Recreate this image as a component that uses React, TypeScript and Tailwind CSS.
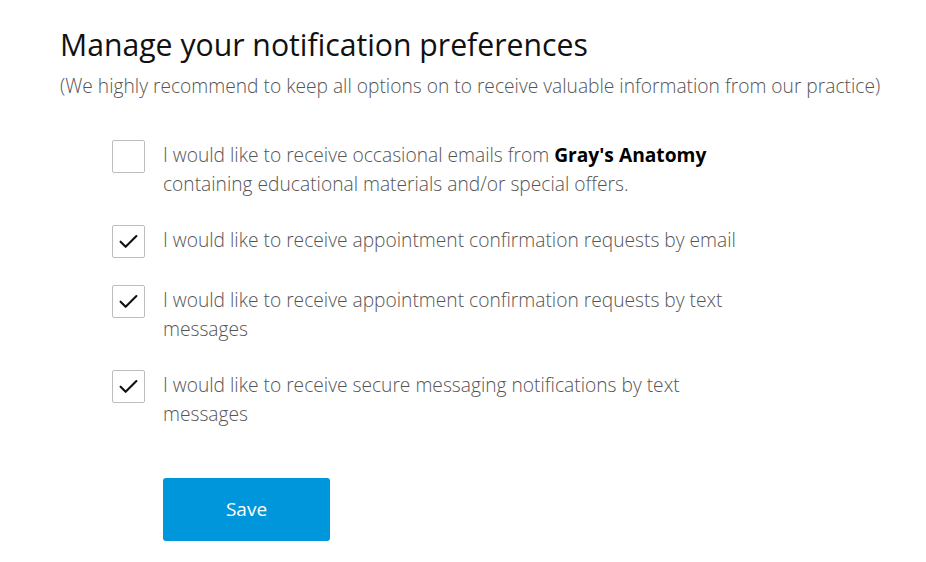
import { useState } from "react";

interface Pref {
  id: string;
  checked: boolean;
  label: React.ReactNode;
}

const initialPrefs: Pref[] = [
  {
    id: "marketing",
    checked: false,
    label: (
      <>
        I would like to receive occasional emails from{" "}
        <strong className="font-bold text-black">Gray's Anatomy</strong> containing educational materials and/or
        special offers.
      </>
    ),
  },
  {
    id: "confirm-email",
    checked: true,
    label: "I would like to receive appointment confirmation requests by email",
  },
  {
    id: "confirm-text",
    checked: true,
    label: "I would like to receive appointment confirmation requests by text messages",
  },
  {
    id: "secure-text",
    checked: true,
    label: "I would like to receive secure messaging notifications by text messages",
  },
];

function CheckMark() {
  return (
    <svg width="19" height="15" viewBox="0 0 18 14" fill="none">
      <path d="M1.5 7.2 L6.3 12 L16.5 1.8" stroke="#111" strokeWidth="2" strokeLinecap="round" strokeLinejoin="round" />
    </svg>
  );
}

export default function App() {
  const [prefs, setPrefs] = useState(initialPrefs);

  const toggle = (id: string) =>
    setPrefs((p) => p.map((x) => (x.id === id ? { ...x, checked: !x.checked } : x)));

  return (
    <div className="min-h-screen bg-white pl-[60px] pt-[25px]" style={{ fontFamily: '"Open Sans", sans-serif' }}>
      <h1 className="text-[30.2px] leading-[40px] font-normal text-[#111]">Manage your notification preferences</h1>
      <p className="mt-[8px] text-[19.2px] leading-[26px] font-light text-[#555]">
        (We highly recommend to keep all options on to receive valuable information from our practice)
      </p>

      <div className="ml-[52px] mt-[41px] flex flex-col gap-[27px]">
        {prefs.map((p) => (
          <label key={p.id} className="flex items-start gap-[18px] cursor-pointer">
            <button
              type="button"
              onClick={() => toggle(p.id)}
              className="w-[33px] h-[33px] shrink-0 border border-[#bdbdbd] rounded-[2px] bg-white flex items-center justify-center"
            >
              {p.checked && <CheckMark />}
            </button>
            <span className="w-[590px] text-[19.2px] leading-[29px] font-light text-[#555]">{p.label}</span>
          </label>
        ))}
      </div>

      <button
        type="button"
        className="ml-[103px] mt-[50px] w-[167px] h-[63px] rounded-[3px] bg-[#0096dc] text-white text-[19px] font-normal"
      >
        Save
      </button>
    </div>
  );
}
